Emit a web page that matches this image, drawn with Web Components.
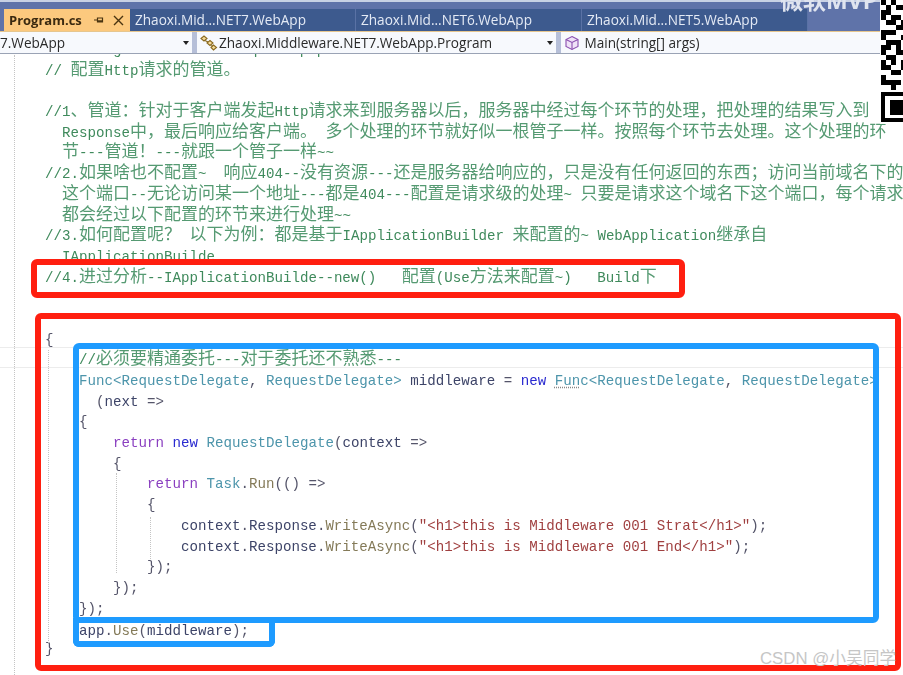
<!DOCTYPE html>
<html lang="zh"><head><meta charset="utf-8"><title>Program.cs</title>
<style>html,body{margin:0;padding:0;background:#fff}</style></head>
<body>
<ide-app></ide-app>
<script>
const UI='"Open Sans","Noto Sans","Noto Sans CJK SC",sans-serif';
class VsTab extends HTMLElement{
  constructor(){super();this.attachShadow({mode:'open'}).innerHTML=`<style>
  :host{display:flex;align-items:center;box-sizing:border-box;width:226px;height:100%;padding-left:5px;background:#3d5a8e;color:#e4eaf5;font:13.6px/20px ${UI};border-right:1px solid #5a72a5;filter:blur(.3px)}
  :host([active]){width:126px;background:#fcc97e;color:#3b2a10;font-size:13px;font-weight:700;border:0;}
  .act{display:none;margin-left:auto;align-items:center;gap:9px;padding-right:6px}
  :host([active]) .act{display:flex}
  svg{display:block}
  </style><slot></slot><span class="act">
  <svg width="10" height="10" viewBox="0 0 10 10" fill="none" stroke="#4a3410" stroke-width="1.2"><path d="M0 5h3M3.5 2.5v5M3.5 3h5v4h-5M3.5 5.8h5"/></svg>
  <svg width="11" height="11" viewBox="0 0 11 11" fill="none" stroke="#4a3410" stroke-width="1.4"><path d="M1 1l9 9M10 1l-9 9"/></svg></span>`;
}}
class VsTabs extends HTMLElement{
  constructor(){super();this.attachShadow({mode:'open'}).innerHTML=`<style>
  :host{display:flex;box-sizing:border-box;height:22px;padding-left:4px}
  </style><slot></slot>`;
}}
class VsCombo extends HTMLElement{
  constructor(){super();this.attachShadow({mode:'open'}).innerHTML=`<style>
  :host{display:flex;align-items:center;box-sizing:border-box;height:100%;background:#f7f9fd;color:#2a2a2a;font:13.6px/20px ${UI};white-space:nowrap;overflow:hidden;filter:blur(.3px)}
  .arrow{margin-left:auto;width:0;height:0;border:3.5px solid transparent;border-top:4px solid #222;border-bottom:0;margin-right:3px;flex:none}
  :host([noarrow]) .arrow{display:none}
  ::slotted(svg){flex:none;margin:0 1px 0 3px}
  </style><slot></slot><span class="arrow"></span>`;
}}
class VsNav extends HTMLElement{
  constructor(){super();this.attachShadow({mode:'open'}).innerHTML=`<style>
  :host{display:grid;grid-template-columns:192px 359px 1fr;column-gap:5px;box-sizing:border-box;height:23px;background:#b6bfd8;border-top:1px solid #e6c68e;border-bottom:1px solid #9aa3b5}
  </style><slot></slot>`;
}}
class QrStrip extends HTMLElement{
  constructor(){super();
    const rows=["10100","01011","11000","10110","01101","00011","11100","10001","01110","11010","10011","01100","10101","11001","00110","10000","11110","00100"];
    let r='';rows.forEach((s,y)=>[...s].forEach((c,x)=>{if(c==='1')r+=`<rect x="${x*5}" y="${y*5}" width="5" height="5"/>`}));
    this.attachShadow({mode:'open'}).innerHTML=`<style>
    :host{position:absolute;left:880px;top:0;width:23px;height:124px;background:#fff}
    svg{display:block;margin-left:1px;filter:blur(.3px)}
    </style><svg width="22" height="122" viewBox="0 0 22 122">${r}
    <path d="M0 92h22v4H4v22h18v4H0V92z"/><rect x="9" y="100" width="13" height="15"/></svg>`;
}}
class MarkBox extends HTMLElement{
  constructor(){super();this.attachShadow({mode:'open'}).innerHTML=`<style>
  :host{position:absolute;box-sizing:border-box;border:6px solid var(--c,#ff1f10);border-radius:6px;pointer-events:none}
  </style>`;
}}
class IndentGuide extends HTMLElement{
  constructor(){super();this.attachShadow({mode:'open'}).innerHTML=`<style>
  :host{position:absolute;width:0;border-left:1px dotted #c4c4c4}
  </style>`;
}}
class WmText extends HTMLElement{
  constructor(){super();this.attachShadow({mode:'open'}).innerHTML=`<style>
  :host{position:absolute;white-space:nowrap;display:block}
  </style><slot></slot>`;
}}
const SRC=[
 '<i class="g">// Configure the HTTP request pipeline.</i>',
 '<i class="g">// 配置Http请求的管道。</i>',
 '',
 '<i class="g">//1、管道：针对于客户端发起Http请求来到服务器以后，服务器中经过每个环节的处理，把处理的结果写入到</i>',
 '<i class="g">  Response中，最后响应给客户端。 多个处理的环节就好似一根管子一样。按照每个环节去处理。这个处理的环</i>',
 '<i class="g">  节---管道！---就跟一个管子一样~~</i>',
 '<i class="g">//2.如果啥也不配置~  响应404--没有资源---还是服务器给响应的，只是没有任何返回的东西；访问当前域名下的</i>',
 '<i class="g">  这个端口--无论访问某一个地址---都是404---配置是请求级的处理~ 只要是请求这个域名下这个端口，每个请求</i>',
 '<i class="g">  都会经过以下配置的环节来进行处理~~</i>',
 '<i class="g">//3.如何配置呢？ 以下为例：都是基于IApplicationBuilder 来配置的~ WebApplication继承自</i>',
 '<i class="g">  IApplicationBuilde</i>',
 '<i class="g">//4.进过分析--IApplicationBuilde--new()   配置(Use方法来配置~)   Build下</i>',
 '','',
 '{',
 '<b class="cur"></b>    <i class="g">//必须要精通委托---对于委托还不熟悉---</i>',
 '    <i class="t">Func&lt;RequestDelegate</i>, <i class="t">RequestDelegate&gt;</i> <i class="v">middleware</i> = <i class="k">new</i> <i class="t"><u>Fun</u>c&lt;RequestDelegate</i>, <i class="t">RequestDelegate&gt;</i>',
 '      (<i class="v">next</i> =&gt;',
 '    {',
 '        <i class="p">return</i> <i class="k">new</i> <i class="t">RequestDelegate</i>(<i class="v">context</i> =&gt;',
 '        {',
 '            <i class="p">return</i> <i class="t">Task</i>.<i class="m">Run</i>(() =&gt;',
 '            {',
 '                <i class="v">context</i>.<i class="v">Response</i>.<i class="m">WriteAsync</i>(<i class="s">"&lt;h1&gt;this is Middleware 001 Strat&lt;/h1&gt;"</i>);',
 '                <i class="v">context</i>.<i class="v">Response</i>.<i class="m">WriteAsync</i>(<i class="s">"&lt;h1&gt;this is Middleware 001 End&lt;/h1&gt;"</i>);',
 '            });',
 '        });',
 '    });',
 '<b class="low"></b>    <i class="v">app</i>.<i class="m">Use</i>(<i class="v">middleware</i>);',
 '}'
];
class CodeEditor extends HTMLElement{
  constructor(){super();const s=this.attachShadow({mode:'open'});
    s.innerHTML=`<style>
    :host{display:block;position:relative;flex:1;min-height:0;overflow:hidden;background:#fff}
    .code{margin-top:-17px;font:14.17px/20.7px "Liberation Mono",monospace;color:#55556a;filter:blur(.35px)}
    .l{display:block;height:20.7px;padding-left:45px;white-space:pre;overflow:visible}
    .l::before{content:"\\200b";font:17px/20.7px "Noto Sans CJK SC",sans-serif}
    .l.cur{box-shadow:inset 0 1px #ececec,inset 0 -1px #ececec}
    .l.low{margin-top:2px;margin-bottom:-3px}
    i{font-style:normal}
    .c{font:17px/20.7px "Noto Sans CJK SC",sans-serif;color:#559a72}
    .g{color:#3f8a5c}.t{color:#4d95ab}.k{color:#2a2ad0}.p{color:#8a3fc0}
    .s{color:#a04040}.v{color:#3d4468}.m{color:#847a58}
    u{text-decoration:underline dotted #888;text-underline-offset:2px}
    </style><div class="code"></div><slot></slot>`;
    const box=s.querySelector('.code');
    SRC.forEach(h=>{
      const d=document.createElement('div');d.className='l';
      if(h.includes('class="cur"'))d.classList.add('cur');
      if(h.includes('class="low"'))d.classList.add('low');
      d.innerHTML=h.replace(/<b class="\w+"><\/b>/,'')||' ';
      const w=document.createTreeWalker(d,NodeFilter.SHOW_TEXT),nodes=[];
      while(w.nextNode())nodes.push(w.currentNode);
      nodes.forEach(n=>{
        const parts=n.nodeValue.split(/([\u3000-\u9fff\uff00-\uffef]+)/);
        if(parts.length<2)return;
        const f=document.createDocumentFragment();
        parts.forEach((p,i)=>{if(!p)return;
          if(i%2){const c=document.createElement('span');c.className='c';c.textContent=p;f.append(c)}
          else f.append(p)});
        n.replaceWith(f);
      });
      box.append(d);
    });
}}
class IdeApp extends HTMLElement{
  constructor(){super();this.attachShadow({mode:'open'}).innerHTML=`<style>
  :host{display:flex;flex-direction:column;position:relative;width:903px;height:675px;overflow:hidden;background:#fff}
  .head{background:#5f73a9;padding-top:9px;box-shadow:inset 0 2px #c8d1e4}
  .top{left:780px;top:-12px;font:700 23px/24px ${UI};color:#dfe4ef;filter:blur(.4px)}
  .wm{left:760px;top:649px;font:16.8px/20px "Liberation Sans","Noto Sans CJK SC",sans-serif;color:#c6c6c6}
  .gx{left:14px;top:55px;height:620px}
  </style>
  <div class="head">
    <vs-tabs>
      <vs-tab active>Program.cs</vs-tab>
      <vs-tab>Zhaoxi.Mid...NET7.WebApp</vs-tab>
      <vs-tab>Zhaoxi.Mid...NET6.WebApp</vs-tab>
      <vs-tab>Zhaoxi.Mid...NET5.WebApp</vs-tab>
    </vs-tabs>
  </div>
  <vs-nav>
    <vs-combo>7.WebApp</vs-combo>
    <vs-combo><svg width="18" height="16" viewBox="0 0 18 16" fill="#f6dc9a" stroke="#8a6a20" stroke-width="1.1"><path d="M1 3.5L4 1l3 2.5L4 6z"/><path d="M7 8l3-2.5L13 8l-3 2.5z"/><path d="M11 12.5l2.5-2.5 3 2.5-3 2.5z"/><path d="M5 5.5L8 7M11.5 10l1 1" fill="none"/></svg>Zhaoxi.Middleware.NET7.WebApp.Program</vs-combo>
    <vs-combo noarrow><svg width="16" height="16" viewBox="0 0 16 16" fill="#efe2f7" stroke="#8a4fb0" stroke-width="1.1"><path d="M8 1.5l6 3v7l-6 3-6-3v-7z"/><path d="M2 4.5l6 3 6-3M8 7.5v7" fill="none"/></svg>&nbsp;Main(string[] args)</vs-combo>
  </vs-nav>
  <code-editor></code-editor>
  <indent-guide class="gx"></indent-guide>
  <indent-guide style="left:48px;top:350px;height:293px"></indent-guide>
  <indent-guide style="left:116px;top:473px;height:100px"></indent-guide>
  <indent-guide style="left:150px;top:517px;height:42px"></indent-guide>
  <wm-text class="top">微软MVP</wm-text>
  <qr-strip></qr-strip>
  <mark-box style="left:31px;top:259px;width:654px;height:39px"></mark-box>
  <mark-box style="left:35px;top:313px;width:866px;height:358px"></mark-box>
  <mark-box style="--c:#1e9bff;left:73px;top:343px;width:806px;height:280px"></mark-box>
  <mark-box style="--c:#1e9bff;left:73px;top:618px;width:202px;height:29px;border-top:0;border-radius:0 0 6px 6px"></mark-box>
  <wm-text class="wm">CSDN @小吴同学</wm-text>`;
}}
customElements.define('vs-tab',VsTab);
customElements.define('vs-tabs',VsTabs);
customElements.define('vs-combo',VsCombo);
customElements.define('vs-nav',VsNav);
customElements.define('qr-strip',QrStrip);
customElements.define('mark-box',MarkBox);
customElements.define('indent-guide',IndentGuide);
customElements.define('wm-text',WmText);
customElements.define('code-editor',CodeEditor);
customElements.define('ide-app',IdeApp);
</script>
</body></html>
